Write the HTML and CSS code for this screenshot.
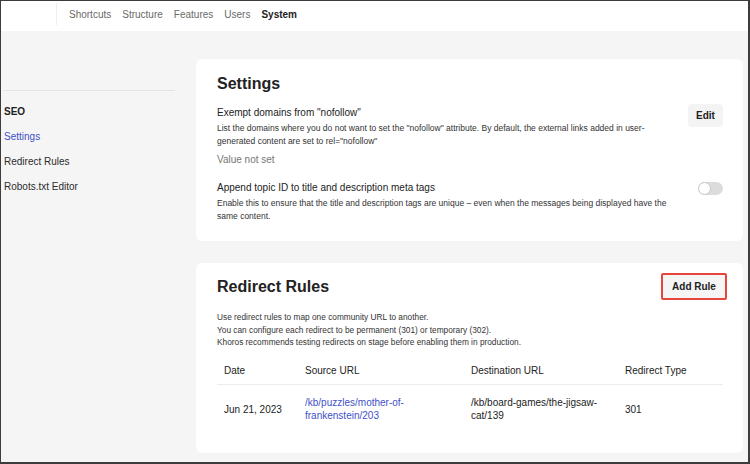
FILE: index.html
```html
<!DOCTYPE html>
<html lang="en">
<head>
<meta charset="utf-8">
<title>SEO Settings</title>
<link rel="stylesheet" href="styles.css">
</head>
<body>
<div class="frame">
  <header class="topbar">
    <div class="brand-divider"></div>
    <nav class="topnav">
      <span class="nav-item">Shortcuts</span>
      <span class="nav-item">Structure</span>
      <span class="nav-item">Features</span>
      <span class="nav-item">Users</span>
      <span class="nav-item active">System</span>
    </nav>
  </header>
  <div class="main">
    <aside class="sidebar">
      <ul class="side-list">
        <li class="side-head">SEO</li>
        <li class="side-item current">Settings</li>
        <li class="side-item">Redirect Rules</li>
        <li class="side-item">Robots.txt Editor</li>
      </ul>
    </aside>
    <section class="content">
      <div class="card settings-card">
        <h2 class="card-title">Settings</h2>
        <div class="setting-row first">
          <div class="setting-text">
            <div class="setting-title">Exempt domains from "nofollow"</div>
            <p class="setting-desc">List the domains where you do not want to set the "nofollow" attribute. By default, the external links added in user-generated content are set to rel="nofollow"</p>
            <div class="setting-value">Value not set</div>
          </div>
          <button class="btn edit-btn">Edit</button>
        </div>
        <div class="setting-row second">
          <div class="setting-text">
            <div class="setting-title">Append topic ID to title and description meta tags</div>
            <p class="setting-desc">Enable this to ensure that the title and description tags are unique – even when the messages being displayed have the same content.</p>
          </div>
          <span class="toggle"><span class="knob"></span></span>
        </div>
      </div>
      <div class="card rules-card">
        <div class="rules-head">
          <h2 class="card-title">Redirect Rules</h2>
          <button class="btn add-btn">Add Rule</button>
        </div>
        <p class="rules-desc">Use redirect rules to map one community URL to another.<br>You can configure each redirect to be permanent (301) or temporary (302).<br>Khoros recommends testing redirects on stage before enabling them in production.</p>
        <table class="rules-table">
          <colgroup>
            <col class="c-date">
            <col class="c-src">
            <col class="c-dst">
            <col class="c-type">
          </colgroup>
          <thead>
            <tr><th>Date</th><th>Source URL</th><th>Destination URL</th><th>Redirect Type</th></tr>
          </thead>
          <tbody>
            <tr>
              <td>Jun 21, 2023</td>
              <td><span class="link">/kb/puzzles/mother-of-frankenstein/203</span></td>
              <td>/kb/board-games/the-jigsaw-cat/139</td>
              <td>301</td>
            </tr>
          </tbody>
        </table>
      </div>
    </section>
  </div>
</div>
</body>
</html>
```

FILE: styles.css
```css
* { box-sizing: border-box; }
html, body { margin: 0; padding: 0; }
body {
  font-family: "Liberation Sans", Arial, sans-serif;
  color: #222;
  background: #fff;
}
.frame {
  width: 750px;
  height: 464px;
  border-style: solid;
  border-color: #3c3c3c;
  border-width: 1px 2px 2px 1px;
  overflow: hidden;
  display: flex;
  flex-direction: column;
  background: #f5f5f5;
}
.topbar {
  height: 30px;
  flex: none;
  background: #fff;
  display: flex;
  align-items: center;
}
.brand-divider {
  width: 1px;
  height: 22px;
  align-self: flex-start;
  margin-top: 2px;
  margin-left: 55px;
  background: #eeeeee;
}
.topnav {
  display: flex;
  gap: 11px;
  margin-left: 12px;
  font-size: 10px;
  line-height: 14px;
  margin-top: -3px;
}
.nav-item { color: #6a6a6a; }
.nav-item.active { color: #222; font-weight: bold; }

.main {
  flex: 1;
  display: flex;
  align-items: flex-start;
}
.sidebar {
  width: 172px;
  flex: none;
  margin-top: 59px;
  margin-left: 2px;
  border-top: 1px solid #e4e4e4;
}
.side-list {
  list-style: none;
  margin: 0;
  padding: 8px 0 0 1px;
  font-size: 10px;
  line-height: 25px;
}
.side-head { font-weight: bold; color: #222; }
.side-item { color: #2c2c2c; }
.side-item.current { color: #3f51c8; }

.content {
  margin-left: 21px;
  margin-top: 28px;
  width: 547px;
  display: flex;
  flex-direction: column;
  gap: 22px;
}
.card {
  background: #fff;
  border-radius: 6px;
  padding: 15px 20px 18px 21px;
}
.card-title {
  margin: 0;
  font-size: 16px;
  line-height: 20px;
  font-weight: bold;
  color: #222;
}
.setting-row {
  display: flex;
  justify-content: space-between;
  align-items: flex-start;
}
.setting-row.first { margin-top: 12px; }
.setting-row.second { margin-top: 14px; }
.setting-text { width: 450px; }
.setting-title {
  font-size: 10px;
  line-height: 14px;
  color: #222;
}
.setting-desc {
  margin: 2px 0 0;
  font-size: 8.5px;
  line-height: 13px;
  color: #333;
}
.setting-value {
  margin-top: 5px;
  font-size: 10px;
  line-height: 14px;
  color: #777;
}
.btn {
  font-family: inherit;
  font-weight: bold;
  font-size: 10px;
  color: #222;
  background: #f4f4f4;
  border: none;
  border-radius: 4px;
  padding: 0;
}
.edit-btn {
  width: 35px;
  height: 23px;
  margin-top: -2px;
}
.toggle {
  width: 25px;
  height: 13px;
  margin-top: 1px;
  border-radius: 7px;
  background: #dcdcdc;
  position: relative;
  flex: none;
}
.knob {
  position: absolute;
  left: 0;
  top: 0;
  width: 13px;
  height: 13px;
  border-radius: 50%;
  background: #fff;
  border: 1px solid #c8c8c8;
}

.rules-card { padding-top: 14px; padding-bottom: 20px; }
.rules-head {
  display: flex;
  justify-content: space-between;
  align-items: flex-start;
}
.add-btn {
  width: 66px;
  height: 27px;
  margin-top: -4px;
  margin-right: -4px;
  border: 2px solid #e5453b;
  border-radius: 2px;
  background: #f5f5f5;
}
.rules-desc {
  margin: 11px 0 0;
  font-size: 8.3px;
  line-height: 12.5px;
  color: #333;
}
.rules-table {
  margin-top: 9px;
  width: 506px;
  border-collapse: collapse;
  table-layout: fixed;
  font-size: 10px;
}
.c-date { width: 81px; }
.c-src { width: 166px; }
.c-dst { width: 154px; }
.c-type { width: 105px; }
.rules-table th {
  text-align: left;
  font-weight: normal;
  color: #222;
  height: 27px;
  padding: 0 7px;
  line-height: 14px;
  border-bottom: 1px solid #ececec;
}
.rules-table td {
  padding: 11px 7px;
  line-height: 13px;
  color: #222;
  vertical-align: middle;
}
.link { color: #3f51c8; }
```
